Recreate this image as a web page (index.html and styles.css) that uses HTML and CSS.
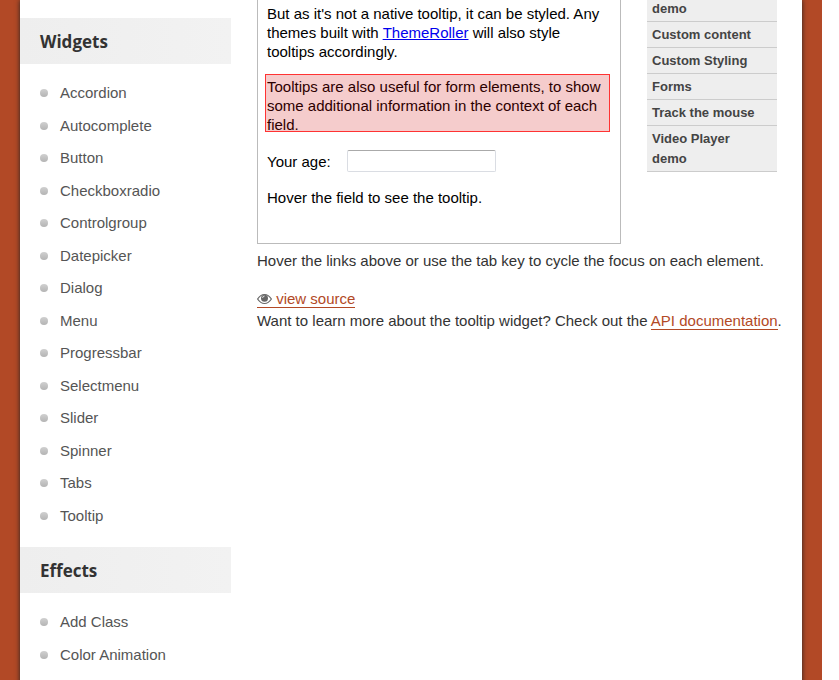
FILE: index.html
```html
<!DOCTYPE html>
<html lang="en">
<head>
<meta charset="utf-8">
<title>Tooltip | jQuery UI</title>
<link rel="stylesheet" href="styles.css">
</head>
<body>
<div class="backdrop">
  <div class="page">
    <nav class="sidebar" aria-label="Categories">
      <h2>Widgets</h2>
      <ul>
        <li><a href="#">Accordion</a></li>
        <li><a href="#">Autocomplete</a></li>
        <li><a href="#">Button</a></li>
        <li><a href="#">Checkboxradio</a></li>
        <li><a href="#">Controlgroup</a></li>
        <li><a href="#">Datepicker</a></li>
        <li><a href="#">Dialog</a></li>
        <li><a href="#">Menu</a></li>
        <li><a href="#">Progressbar</a></li>
        <li><a href="#">Selectmenu</a></li>
        <li><a href="#">Slider</a></li>
        <li><a href="#">Spinner</a></li>
        <li><a href="#">Tabs</a></li>
        <li><a href="#">Tooltip</a></li>
      </ul>
      <h2>Effects</h2>
      <ul>
        <li><a href="#">Add Class</a></li>
        <li><a href="#">Color Animation</a></li>
      </ul>
    </nav>
    <main class="content">
      <div class="demo-row">
        <section class="demo">
          <p>But as it's not a native tooltip, it can be styled. Any themes built with <a href="#">ThemeRoller</a> will also style tooltips accordingly.</p>
          <p class="highlight">Tooltips are also useful for form elements, to show some additional information in the context of each field.</p>
          <p class="field"><label for="age">Your age:</label><input id="age" type="text"></p>
          <p>Hover the field to see the tooltip.</p>
        </section>
        <nav class="examples" aria-label="Examples">
          <ul>
            <li><a href="#">demo</a></li>
            <li><a href="#">Custom content</a></li>
            <li><a href="#">Custom Styling</a></li>
            <li><a href="#">Forms</a></li>
            <li><a href="#">Track the mouse</a></li>
            <li><a href="#">Video Player demo</a></li>
          </ul>
        </nav>
      </div>
      <p class="description">Hover the links above or use the tab key to cycle the focus on each element.</p>
      <p><a class="link" href="#"><svg class="eye" viewBox="0 0 15 12" aria-hidden="true"><path d="M.6 6Q3.500 1.500 7.500 1.500T14.400 6Q11.500 10.500 7.500 10.500T.6 6Z" fill="#fff" stroke="#666" stroke-width="1.200"/><circle cx="7.500" cy="5.200" r="3.500" fill="#666"/><path d="M5.600 5a2 2 0 0 1 2-2" fill="none" stroke="#fff" stroke-width=".8"/></svg> view source</a></p>
      <p>Want to learn more about the tooltip widget? Check out the <a class="link" href="#">API documentation</a>.</p>
    </main>
  </div>
</div>
</body>
</html>
```
FILE: styles.css
```css
* { box-sizing: border-box; }

body {
  margin: 0;
  background: #fff;
  color: #333;
  font: 15px/22px "Liberation Sans", Arial, sans-serif;
}

ul, p, h2 { margin: 0; padding: 0; }
ul { list-style: none; }

.backdrop {
  margin-right: 17px;
  padding: 0 20px;
  background: #b24926;
  overflow: hidden;
}

.page {
  display: flex;
  align-items: flex-start;
  min-height: 100vh;
  background: #fff;
  box-shadow: 0 0 5px #222;
}

.sidebar {
  flex: 0 0 211px;
  padding-top: 18px;
}

.sidebar h2 {
  padding: 2px 20px 0;
  background: linear-gradient(90deg, #eee, #f2f2f2);
  color: #333;
  font: bold 17px/44px "Open Sans", sans-serif;
}

.sidebar ul { padding: 13px 20px 15px; }

.sidebar li {
  display: flex;
  align-items: center;
  gap: 12px;
  height: 32px;
}

.sidebar li:nth-child(odd) { margin-bottom: 1px; }

.sidebar li::before {
  content: "";
  width: 8px;
  height: 8px;
  border-radius: 50%;
  background: linear-gradient(#d0d0d0, #b4b4b4);
}

.sidebar a { color: #555; text-decoration: none; }

.content {
  flex: 1;
  padding-left: 26px;
}

.demo-row {
  display: flex;
  align-items: flex-start;
  gap: 26px;
  margin: 0 25px 6px 0;
}

.demo {
  flex: 1;
  padding: 4px 11px 36px 9px;
  border: 1px solid #bbb;
  border-top: 0;
  color: #000;
  line-height: 19px;
}

.demo p + p { margin-top: 16px; }
.demo a { color: #00e; }

.highlight { position: relative; }

.highlight::after {
  content: "";
  position: absolute;
  inset: -3px -1px 2px -2px;
  border: 1px solid #f33;
  background: rgba(204, 0, 0, 0.2);
}

.field {
  display: flex;
  align-items: center;
  gap: 16px;
}

.field input {
  width: 149px;
  height: 22px;
  border: 1px solid #dadde3;
  border-top-color: #aaa;
  border-radius: 2px;
  background: #fff;
}

.description { margin-bottom: 16px; }

.link {
  border-bottom: 1px solid #b24926;
  color: #b24926;
  text-decoration: none;
}

.eye {
  width: 15px;
  height: 12px;
  vertical-align: -1px;
}

.examples { flex: 0 0 130px; }

.examples li {
  padding: 3px 16px 2px 5px;
  border-bottom: 1px solid #ccc;
  background: #eee;
  font-size: 13px;
  font-weight: bold;
  line-height: 20px;
}

.examples li:first-child {
  padding: 0 5px 3px;
  line-height: 18px;
}

.examples a { color: #444; text-decoration: none; }
```
